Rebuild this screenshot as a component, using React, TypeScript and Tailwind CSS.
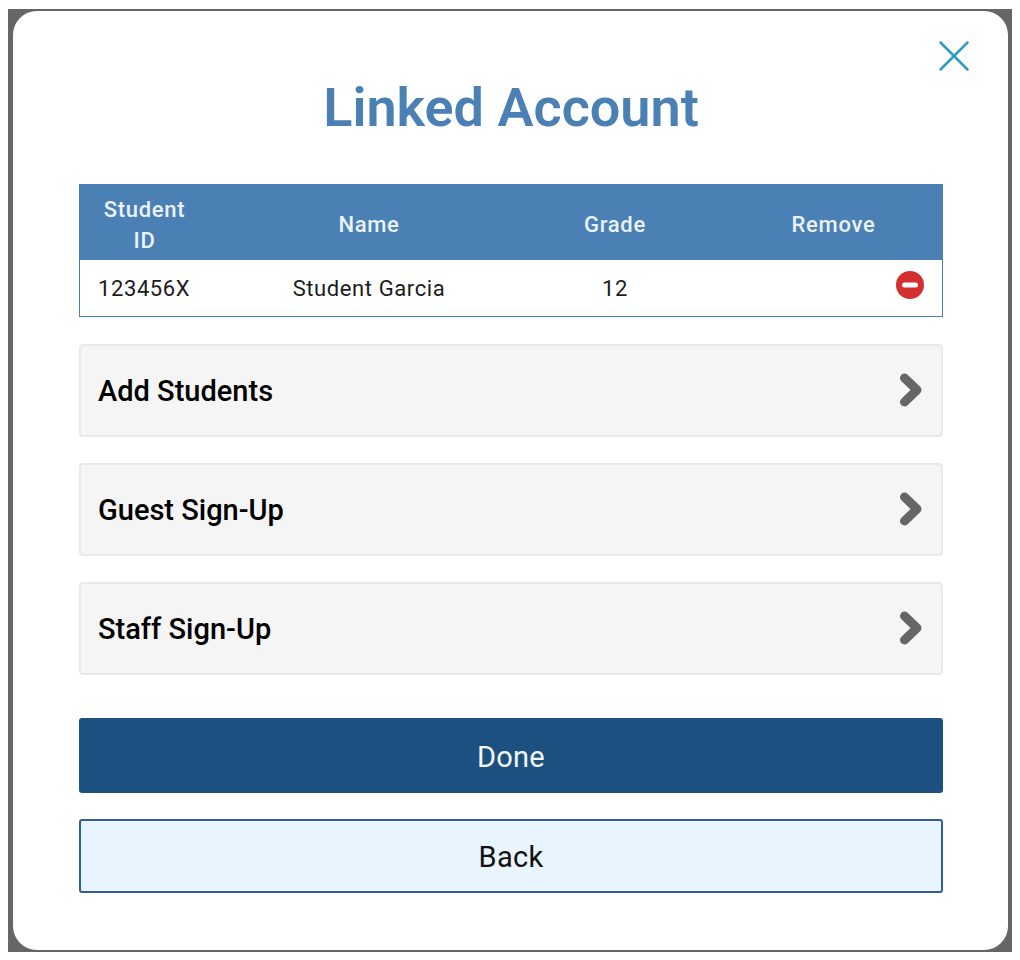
import { X } from "lucide-react";

const links = ["Add Students", "Guest Sign-Up", "Staff Sign-Up"];

function LinkRow({ label }: { label: string }) {
  return (
    <button className="flex h-[93px] w-full items-center justify-between rounded-[4px] border-2 border-[#e9e9e9] bg-[#f5f5f5] pl-[17px] pr-[15px] text-left">
      <span className="pt-[2px] text-[29px] font-medium text-black">{label}</span>
      <svg width="28" height="36" viewBox="0 0 28 36" className="mb-[2px] text-[#666666]">
        <path d="M6.5 6 L19 18 L6.5 30" fill="none" stroke="currentColor" strokeWidth="9" strokeLinecap="round" strokeLinejoin="round" />
      </svg>
    </button>
  );
}

export default function App() {
  return (
    <div className="h-[960px] w-[1020px] bg-white pl-[8px] pt-[9px] font-['Roboto',sans-serif]">
      <div className="h-[943px] w-[1004px] bg-[#666666] pb-[2px] pl-[5px] pr-[4px] pt-[2px]">
        <div className="relative h-full w-full rounded-[24px] bg-white pl-[66px] pr-[65px] pt-[65px]">
          <button aria-label="Close" className="absolute right-[27px] top-[18px] text-[#2f9bc9]">
            <X size={54} strokeWidth={1.1} />
          </button>
          <h1 className="text-center text-[54px] leading-[64px] font-semibold text-[#4a80b4]">Linked Account</h1>
          <div className="mt-[44px] border border-t-0 border-[#4a80b4]">
            <div className="grid h-[76px] grid-cols-[153px_272px_220px_217px] items-center bg-[#4a80b4] pt-[5px] text-center text-[22px] leading-[31px] font-medium tracking-[0.7px] text-[#eaf3fb]">
              <div className="pr-[24px]">
                Student
                <br />
                ID
              </div>
              <div>Name</div>
              <div>Grade</div>
              <div>Remove</div>
            </div>
            <div className="grid h-[56px] grid-cols-[153px_272px_220px_217px] items-center pt-[1px] text-[22px] tracking-[0.6px] text-[#1c1c1c]">
              <div className="pl-[18px]">123456X</div>
              <div className="text-center">Student Garcia</div>
              <div className="text-center">12</div>
              <div className="flex justify-end pb-[8px] pr-[18px]">
                <svg width="28" height="28" viewBox="0 0 28 28">
                  <circle cx="14" cy="14" r="14" fill="#d32f2f" />
                  <rect x="6" y="11.5" width="16" height="5" rx="2.5" fill="#ffffff" />
                </svg>
              </div>
            </div>
          </div>
          <div className="mt-[27px] flex flex-col gap-[26px]">
            {links.map((l) => (
              <LinkRow key={l} label={l} />
            ))}
          </div>
          <button className="mt-[43px] flex h-[75px] w-full items-center justify-center rounded-[3px] bg-[#1b5080] pt-[4px] text-[29px] tracking-[0.2px] text-[#f2f7fb]">
            Done
          </button>
          <button className="mt-[26px] flex h-[74px] w-full items-center justify-center rounded-[3px] border-2 border-[#2f5f94] bg-[#e9f5fe] pt-[3px] text-[29px] tracking-[0.3px] text-[#111111]">
            Back
          </button>
        </div>
      </div>
    </div>
  );
}
